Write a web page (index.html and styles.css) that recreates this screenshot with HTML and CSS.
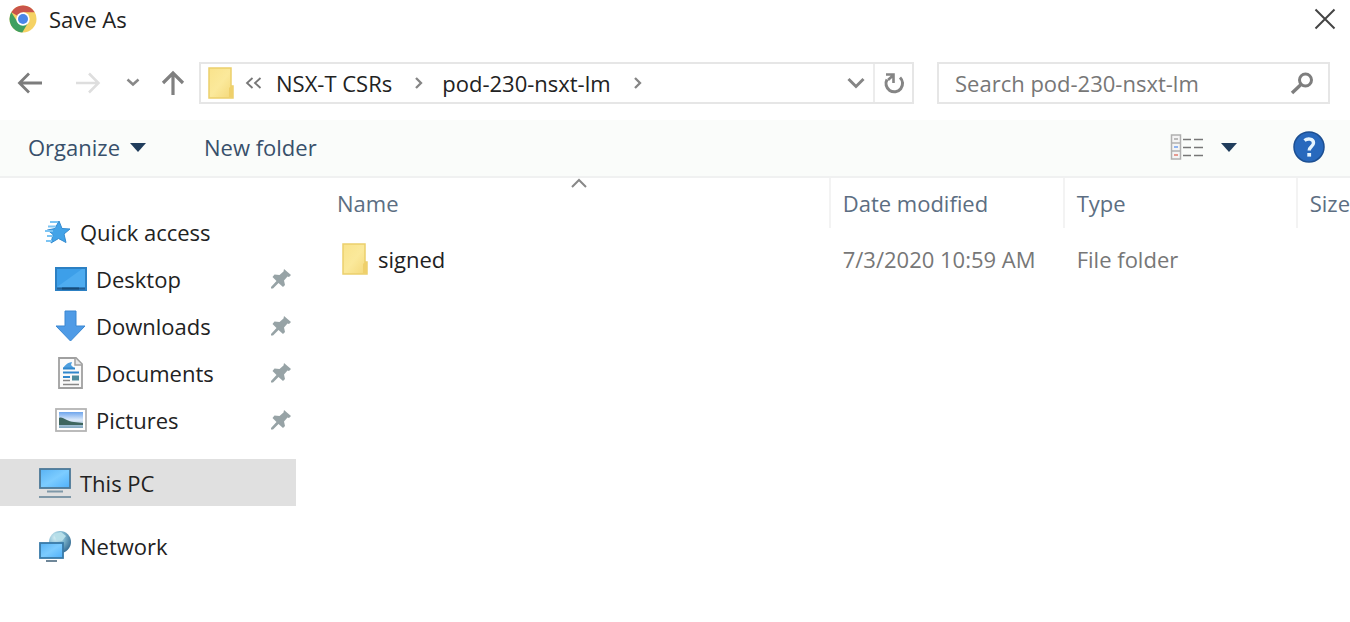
FILE: index.html
```html
<!DOCTYPE html>
<html lang="en">
<head>
<meta charset="utf-8">
<title>Save As</title>
<link rel="stylesheet" href="styles.css">
</head>
<body>
<svg class="defs" aria-hidden="true">
  <defs>
    <linearGradient id="gold" x1="0" y1="0" x2="1" y2="1"><stop offset="0" stop-color="#f9e38c"/><stop offset=".5" stop-color="#fbe99b"/><stop offset="1" stop-color="#f3d778"/></linearGradient>
    <linearGradient id="screen" x1="0" y1="0" x2="1" y2="1"><stop offset="0" stop-color="#58b2f4"/><stop offset=".5" stop-color="#7cccff"/><stop offset="1" stop-color="#4fb0fa"/></linearGradient>
    <linearGradient id="sky" x1="0" y1="0" x2="0" y2="1"><stop offset="0" stop-color="#6ea5ec"/><stop offset=".5" stop-color="#dceafa"/><stop offset="1" stop-color="#7fa6bd"/></linearGradient>
    <radialGradient id="globe" cx=".3" cy=".3" r=".8"><stop offset="0" stop-color="#d8f0f6"/><stop offset=".5" stop-color="#7fb7cf"/><stop offset="1" stop-color="#356a90"/></radialGradient>
    <symbol id="folder" viewBox="0 0 28 34"><path d="M2 2h22v18h2v12H2z" fill="url(#gold)" stroke="#ecd06c" stroke-width="1.5"/><path d="M22 31V22l2-2h2v11z" fill="#efd06b"/></symbol>
    <symbol id="pin" viewBox="0 0 22 22"><path d="M14 1l7 6-2 2-1.500-.5-3.500 4 1 4.500-2 2-4.500-4L3 20.500H1V19l5.500-6L2.500 9l2-2.500 5 .5 4-3.500z" fill="#97a3a6"/></symbol>
    <symbol id="chevron" viewBox="0 0 10 12"><path d="M2 1l5 5-5 5" fill="none" stroke="#858585" stroke-width="2.300"/></symbol>
  </defs>
</svg>
<main class="dialog">
  <header class="titlebar">
    <svg class="chrome" viewBox="0 0 28 28" aria-hidden="true">
      <circle cx="14" cy="14" r="13.500" fill="#f5d264"/>
      <path d="M14 14L2.300 7.300A13.500 13.500 0 0 1 25.700 7.300H14z" fill="#c9544a"/>
      <path d="M2.300 7.300A13.500 13.500 0 0 0 13.300 27.500L19.500 17 14 14 8.500 17z" fill="#3f9f60"/>
      <circle cx="14" cy="14" r="6.700" fill="#fff"/><circle cx="14" cy="14" r="5" fill="#4a86e8"/>
    </svg>
    <h1 class="title">Save As</h1>
    <button class="close" aria-label="Close"><svg width="22" height="22" viewBox="0 0 22 22"><path d="M1.500 1.500l19 19M20.500 1.500l-19 19" stroke="#444" stroke-width="2"/></svg></button>
  </header>

  <nav class="navbar" aria-label="Location">
    <div class="history">
      <button aria-label="Back"><svg width="26" height="22" viewBox="0 0 26 22"><path d="M25 11H3M12 1.500L2.500 11l9.500 9.500" fill="none" stroke="#7c7c7c" stroke-width="2.800"/></svg></button>
      <button aria-label="Forward"><svg width="26" height="22" viewBox="0 0 26 22"><path d="M1 11h22M14 1.500l9.500 9.500-9.500 9.500" fill="none" stroke="#dedede" stroke-width="2.500"/></svg></button>
      <button aria-label="Recent locations"><svg width="14" height="10" viewBox="0 0 14 10"><path d="M1.500 1.500L7 6.500l5.500-5" fill="none" stroke="#888" stroke-width="2.500"/></svg></button>
      <button aria-label="Up"><svg width="24" height="26" viewBox="0 0 24 26"><path d="M12 25V3M2 13L12 3l10 10" fill="none" stroke="#808080" stroke-width="3.200"/></svg></button>
    </div>
    <div class="address">
      <svg class="folder" aria-hidden="true"><use href="#folder"/></svg>
      <button class="more" aria-label="More folders"><svg width="17" height="12" viewBox="0 0 17 12"><path d="M7.500 1L2 6l5.500 5M15.500 1L10 6l5.500 5" fill="none" stroke="#777" stroke-width="1.800"/></svg></button>
      <a class="crumb" href="#csrs">NSX-T CSRs</a>
      <svg class="chevron" aria-hidden="true"><use href="#chevron"/></svg>
      <a class="crumb" href="#pod">pod-230-nsxt-lm</a>
      <svg class="chevron" aria-hidden="true"><use href="#chevron"/></svg>
      <button class="expand" aria-label="Previous locations"><svg width="18" height="12" viewBox="0 0 18 12"><path d="M1.500 2L9 9.500 16.500 2" fill="none" stroke="#858585" stroke-width="3"/></svg></button>
      <button class="refresh" aria-label="Refresh"><svg width="22" height="24" viewBox="0 0 22 24"><path d="M17 6.500A8.300 8.300 0 1 1 4 8.500" fill="none" stroke="#858585" stroke-width="3"/><path d="M3 3.500h7.500V12M10.500 4L5 9" fill="none" stroke="#858585" stroke-width="2.600"/></svg></button>
    </div>
    <label class="search">
      <input type="search" placeholder="Search pod-230-nsxt-lm" aria-label="Search pod-230-nsxt-lm">
      <svg width="24" height="24" viewBox="0 0 24 24" aria-hidden="true"><circle cx="15.500" cy="9" r="6" fill="none" stroke="#7e7e7e" stroke-width="3"/><path d="M11 13.500L2 22" stroke="#7e7e7e" stroke-width="3.400"/></svg>
    </label>
  </nav>

  <div class="toolbar">
    <button class="command">Organize <svg width="16" height="9" viewBox="0 0 16 9" aria-hidden="true"><path d="M0 0h16L8 9z" fill="#203d5c"/></svg></button>
    <button class="command">New folder</button>
    <button class="view" aria-label="Change view">
      <svg width="34" height="26" viewBox="0 0 34 26"><rect x="1.500" y="1" width="9" height="24" fill="#f4f4f4" stroke="#b0b0b0" stroke-width="1.500"/><path d="M2 9h8M2 17h8" stroke="#b0b0b0" stroke-width="1.500"/><path d="M4 5h4" stroke="#bbb" stroke-width="2"/><path d="M4 13h4" stroke="#8fb4f0" stroke-width="2"/><path d="M4 21h4" stroke="#e69a90" stroke-width="2"/><path d="M13 5.500h8m3 0h9M13 13.500h8m3 0h9M13 21.500h8m3 0h9" stroke="#777" stroke-width="1.600"/></svg>
      <svg width="16" height="9" viewBox="0 0 16 9"><path d="M0 0h16L8 9z" fill="#203d5c"/></svg>
    </button>
    <button class="help" aria-label="Help"><svg width="32" height="32" viewBox="0 0 32 32"><circle cx="16" cy="16" r="15" fill="#2869bd" stroke="#1c4f92" stroke-width="1.500"/><path d="M11.500 9.500C14 7.500 20.500 7 20.500 12c0 3.500-4.300 3.500-4.300 7.500" fill="none" stroke="#e6f5ff" stroke-width="3.400"/><rect x="14.300" y="22" width="3.800" height="3.600" fill="#e6f5ff"/></svg></button>
  </div>

  <div class="content">
    <aside class="places">
      <ul>
        <li><a class="place" href="#quick"><svg width="32" height="28" viewBox="0 0 32 28"><path d="M17 3l3 7.500 8 .5-6 5 2 8.500-7.500-4L9 25l2-8.500-5.500-4.500 7.500-1.500z" fill="#43a3e8" stroke="#348bd0"/><path d="M8 4h8M6 8.500h8M3 13h8M5 18h6M4 23h6" stroke="#7cc4f3" stroke-width="1.800"/></svg>Quick access</a></li>
        <li><a class="place sub" href="#desktop"><svg width="32" height="26" viewBox="0 0 32 26"><rect x="1" y="2" width="30" height="22" fill="#3d9fe9" stroke="#2c80c3" stroke-width="2"/><path d="M2 21L27 3h3v18z" fill="#4eacf0"/><path d="M2 22.500h28" stroke="#245f94" stroke-width="2"/><path d="M7 22.500h17" stroke="#174c79" stroke-width="2"/></svg>Desktop<svg class="pin"><use href="#pin"/></svg></a></li>
        <li><a class="place sub" href="#downloads"><svg width="32" height="32" viewBox="0 0 32 32"><path d="M10 1h11v15h9L15.500 31 1 16h9z" fill="#4f9be6" stroke="#3b87d2"/></svg>Downloads<svg class="pin"><use href="#pin"/></svg></a></li>
        <li><a class="place sub" href="#documents"><svg width="32" height="32" viewBox="0 0 32 32"><path d="M4 1h17l6 6v24H4z" fill="#fafafa" stroke="#a0a0a0" stroke-width="1.800"/><path d="M20 1v7h7" fill="#e8e8e8" stroke="#a0a0a0" stroke-width="1.500"/><path d="M8 11c2-2 3-5 9-6l-1 3 3 3z" fill="#4d9ede"/><path d="M8 11.500h12M8 15.500h16M8 20h7" stroke="#2f86cc" stroke-width="2"/><path d="M17 18.500h7v5h-7z" fill="#4e8c9d"/><path d="M8 23.500h7M8 27.500h16" stroke="#888" stroke-width="1.500"/></svg>Documents<svg class="pin"><use href="#pin"/></svg></a></li>
        <li><a class="place sub" href="#pictures"><svg width="32" height="26" viewBox="0 0 32 26"><rect x="1" y="2" width="30" height="22" fill="#fff" stroke="#b4b4b4" stroke-width="1.800"/><rect x="4" y="5" width="24" height="16" fill="url(#sky)"/><path d="M4 11c4-2 8 4 15 4l9 1v2H4z" fill="#3e665f"/></svg>Pictures<svg class="pin"><use href="#pin"/></svg></a></li>
      </ul>
      <a class="place root selected" href="#pc" aria-current="true"><svg width="34" height="32" viewBox="0 0 34 32"><rect x="2" y="2" width="30" height="19" fill="url(#screen)" stroke="#4c7897" stroke-width="1.800"/><path d="M9 24.500h16M1 30h32" stroke="#7f98a8" stroke-width="1.800"/></svg>This PC</a>
      <a class="place root" href="#network"><svg width="34" height="32" viewBox="0 0 34 32"><circle cx="22" cy="12" r="11" fill="url(#globe)"/><path d="M16 4l7-2 5 4-4 5-6-1z" fill="#b7dfe9"/><rect x="2" y="13" width="23" height="15" fill="url(#screen)" stroke="#397aa8" stroke-width="1.800"/><path d="M8 31h11" stroke="#6f8799" stroke-width="2"/></svg>Network</a>
    </aside>
    <table class="files">
      <colgroup><col><col class="col-date"><col class="col-type"><col class="col-size"></colgroup>
      <thead>
        <tr><th aria-sort="ascending">Name<svg class="sort" width="16" height="10" viewBox="0 0 16 10"><path d="M1 9l7-7 7 7" fill="none" stroke="#888" stroke-width="2"/></svg></th><th>Date modified</th><th>Type</th><th>Size</th></tr>
      </thead>
      <tbody>
        <tr><td><a class="file" href="#signed"><svg class="folder" aria-hidden="true"><use href="#folder"/></svg>signed</a></td><td>7/3/2020 10:59 AM</td><td>File folder</td><td></td></tr>
      </tbody>
    </table>
  </div>
</main>
</body>
</html>
```

FILE: styles.css
```css
* { box-sizing: border-box; }
body { margin: 0; background: #fff; color: #222; font: 22px/30px "Open Sans", "Noto Sans", sans-serif; overflow-x: hidden; }
button { display: flex; align-items: center; justify-content: center; padding: 0; border: 0; background: none; color: inherit; font: inherit; }
a { color: inherit; text-decoration: none; }
svg { display: block; flex: none; }
.defs { position: absolute; width: 0; height: 0; }
.dialog { display: flex; flex-direction: column; min-height: 100vh; }

.titlebar { display: flex; align-items: center; height: 38px; padding: 0 14px 0 9px; }
.chrome { width: 28px; height: 28px; }
.title { margin: 0 auto 0 12px; font-size: 22px; font-weight: 400; line-height: 30px; }

.navbar { display: flex; align-items: center; height: 82px; padding: 8px 20px 0 17px; }
.history { display: flex; align-items: center; width: 182px; gap: 32px; }
.history button:nth-child(3) { margin: 0 -11px 0 -7px; }
.address, .search { display: flex; align-items: center; height: 42px; border: 2px solid #e6e6e6; }
.address { flex: 1; padding-left: 6px; }
.folder { width: 28px; height: 34px; }
.more { margin: 0 14px 0 10px; }
.chevron { width: 10px; height: 12px; margin: 0 18px 0 22px; }
.expand { margin: 0 8px 0 auto; }
.refresh { align-self: stretch; width: 39px; border-left: 2px solid #ececec; }
.search { width: 393px; margin-left: 23px; padding: 0 14px 0 16px; }
.search input { flex: 1; min-width: 0; padding: 0; border: 0; outline: 0; background: none; color: #333; font: inherit; }
.search input::placeholder { color: #777; opacity: 1; }

.toolbar { display: flex; align-items: center; height: 58px; padding: 0 25px 2px 28px; gap: 58px; border-bottom: 2px solid #f0f1f1; background: #fafcfa; color: #38506b; }
.command { gap: 10px; }
.view { gap: 17px; margin-left: auto; margin-right: -2px; }

.content { display: flex; flex: 1; }
.places { width: 296px; padding-top: 30px; }
.places ul { margin: 0; padding: 0; list-style: none; }
.place { display: flex; align-items: center; height: 47px; gap: 6px; padding-left: 42px; }
.place.sub { gap: 9px; padding: 0 4px 0 55px; }
.place.root { margin-top: 16px; padding-left: 38px; gap: 8px; }
.place.selected { background: #e0e0e0; }
.pin { width: 22px; height: 22px; margin-left: auto; }

.files { flex: 1; min-width: 0; align-self: flex-start; margin-left: 29px; table-layout: fixed; border-collapse: separate; border-spacing: 0; }
.col-date { width: 234px; }
.col-type { width: 233px; }
.col-size { width: 52px; }
.files th, .files td { padding: 0 0 0 12px; font-weight: 400; text-align: left; white-space: nowrap; }
.files th { position: relative; height: 50px; border-left: 2px solid #f3f3f3; color: #5c6e82; }
.files td { height: 62px; border-left: 2px solid transparent; color: #777; }
.files th:first-child { border-left: 0; }
.files td:first-child { padding-left: 14px; }
.sort { position: absolute; top: 0; left: 50%; margin-left: -6px; }
.file { display: flex; align-items: center; gap: 9px; color: #222; }
```
